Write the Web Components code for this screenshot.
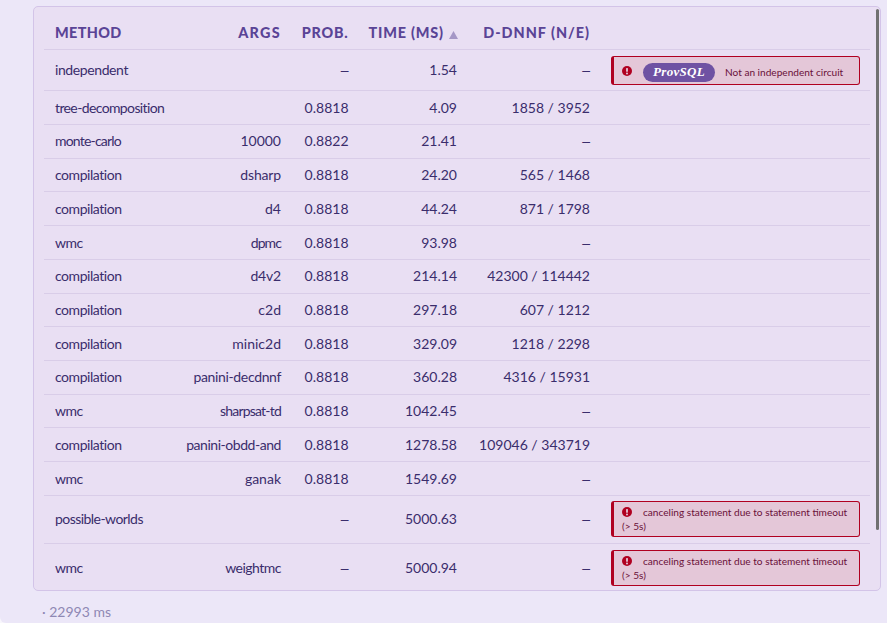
<!DOCTYPE html>
<html><head><meta charset="utf-8">
<style>
html{height:100%;background:#f8f6fc}
html,body{margin:0;overflow:hidden}
body{height:100%;background:#ece7f8;border-bottom-left-radius:6px;font-family:"Lato","Noto Sans",sans-serif}
</style></head><body>
<result-panel></result-panel>
<script>
const ICON=`<svg width="10" height="10" viewBox="0 0 10 10"><circle cx="5" cy="5" r="5" fill="#b00020"/><rect x="4.1" y="2" width="1.8" height="3.8" rx=".5" fill="#e4c6d8"/><circle cx="5" cy="7.4" r="1" fill="#e4c6d8"/></svg>`;
class ErrBox extends HTMLElement{
  constructor(){super();this.attachShadow({mode:'open'}).innerHTML=`<style>
  :host{display:block;box-sizing:border-box;background:#e4c7d8;border:1px solid #b00020;border-left-width:3px;border-radius:3px;padding:var(--pad,3px 8px 3px 8px);font-size:10.1px;line-height:14px;color:#6a1038;width:249px;white-space:normal}
  .i{display:inline-block;vertical-align:-1px;margin-right:11px;line-height:0}
  </style><span class="i">${ICON}</span><slot></slot>`}
}
customElements.define('err-box',ErrBox);
class ProvBadge extends HTMLElement{
  constructor(){super();this.attachShadow({mode:'open'}).innerHTML=`<style>
  :host{display:inline-block;background:#6f52a3;color:#fff;font:italic bold 13px "Liberation Serif",serif;border-radius:10px;width:72px;height:19px;line-height:18px;text-align:center;letter-spacing:.3px;vertical-align:middle;margin-right:10px}
  </style><slot></slot>`}
}
customElements.define('prov-badge',ProvBadge);
const ERR='<err-box>canceling statement due to statement timeout (&gt;&nbsp;5s)</err-box>';
const S=33.72;
const rows=[
['independent','','–','1.54','–',41,'<err-box style="--pad:6px 8px 2px 8px;margin-top:1px"><prov-badge>ProvSQL</prov-badge><span style="vertical-align:-1px">Not an independent circuit</span></err-box>'],
['tree-decomposition','','0.8818','4.09','1858 / 3952',34],
['monte-carlo','10000','0.8822','21.41','–',S],
['compilation','dsharp','0.8818','24.20','565 / 1468',S],
['compilation','d4','0.8818','44.24','871 / 1798',S],
['wmc','dpmc','0.8818','93.98','–',S],
['compilation','d4v2','0.8818','214.14','42300 / 114442',S],
['compilation','c2d','0.8818','297.18','607 / 1212',S],
['compilation','minic2d','0.8818','329.09','1218 / 2298',S],
['compilation','panini-decdnnf','0.8818','360.28','4316 / 15931',S],
['wmc','sharpsat-td','0.8818','1042.45','–',S],
['compilation','panini-obdd-and','0.8818','1278.58','109046 / 343719',S],
['wmc','ganak','0.8818','1549.69','–',S],
['possible-worlds','','–','5000.63','–',48,ERR],
['wmc','weightmc','–','5000.94','–',47,ERR,2],
];
const cell=v=>v==='–'?'<span class="dash">–</span>':v;
const MS={'tree-decomposition':-.62,'monte-carlo':-.8,'compilation':-.45,'wmc':-.5,'independent':-.4,'possible-worlds':-.55};
const AS={'panini-decdnnf':-.35,'panini-obdd-and':-.45,'sharpsat-td':-.8,'weightmc':-.5,'dpmc':-.9,'dsharp':-.15,'d4v2':-.2};
class ResultRow extends HTMLElement{
  set data(d){
    const s=this.shadowRoot||this.attachShadow({mode:'open'});
    s.innerHTML=`<style>
    :host{display:grid;grid-template-columns:var(--cols);align-items:center;height:${d[5]}px;border-top:1px solid #d9cde8;box-sizing:border-box;padding:${d[7]||0}px 0 ${d[7]?0:1}px;font-size:14px;color:#3a2d6c}
    div{white-space:nowrap}
    .r{text-align:right}
    .m{padding-left:11px}
    .e{padding-left:21px}
    .dash{font-family:"Liberation Sans",sans-serif}
    </style>
    <div class="m" style="letter-spacing:${MS[d[0]]||0}px">${d[0]}</div><div class="r" style="letter-spacing:${AS[d[1]]||0}px">${d[1]}</div><div class="r">${cell(d[2])}</div><div class="r">${d[3]}</div><div class="r">${cell(d[4])}</div><div class="e">${d[6]||''}</div>`;
  }
}
customElements.define('result-row',ResultRow);
class ResultPanel extends HTMLElement{
  constructor(){super();this.attachShadow({mode:'open'}).innerHTML=`<style>
  :host{display:block;padding:6px 6px 0 33px;--cols:130px 107px 67.5px 108.5px 133px 1fr}
  .card{position:relative;box-sizing:border-box;height:585px;border:1px solid #d3c4e8;border-radius:5px;background:#e9dff3;padding:9px 10px 0}
  .head{display:grid;grid-template-columns:var(--cols);align-items:center;height:33px;font-weight:900;font-size:14.4px;letter-spacing:.8px;color:#5a4496;white-space:nowrap}
  .head div{text-align:right}
  .head div:first-child{text-align:left;padding-left:11px;letter-spacing:.35px}
  .args{letter-spacing:1.3px}
  .dn{letter-spacing:.98px}
  .arrow{display:inline-block;margin-left:5px;margin-right:-.8px;vertical-align:-1px;line-height:0}
  .bar{position:absolute;right:1px;top:2px;width:3px;height:521px;border-radius:2px;background:#707070}
  .foot{padding:12px 0 0 9px;font-size:14px;color:#8f88b4;line-height:17px}
  </style>
  <div class="card"><div class="head"><div>METHOD</div><div class="args">ARGS</div><div>PROB.</div><div>TIME (MS)<span class="arrow"><svg width="9" height="8" viewBox="0 0 9 8"><path d="M4.5 0L9 8H0Z" fill="#a597c6"/></svg></span></div><div class="dn">D-DNNF (N/E)</div><div></div></div><div id="b"></div><div class="bar"></div></div>
  <div class="foot">· 22993 ms</div>`;
  const b=this.shadowRoot.getElementById('b');
  for(const d of rows){const r=document.createElement('result-row');r.data=d;b.append(r);}
  }
}
customElements.define('result-panel',ResultPanel);
</script></body></html>
